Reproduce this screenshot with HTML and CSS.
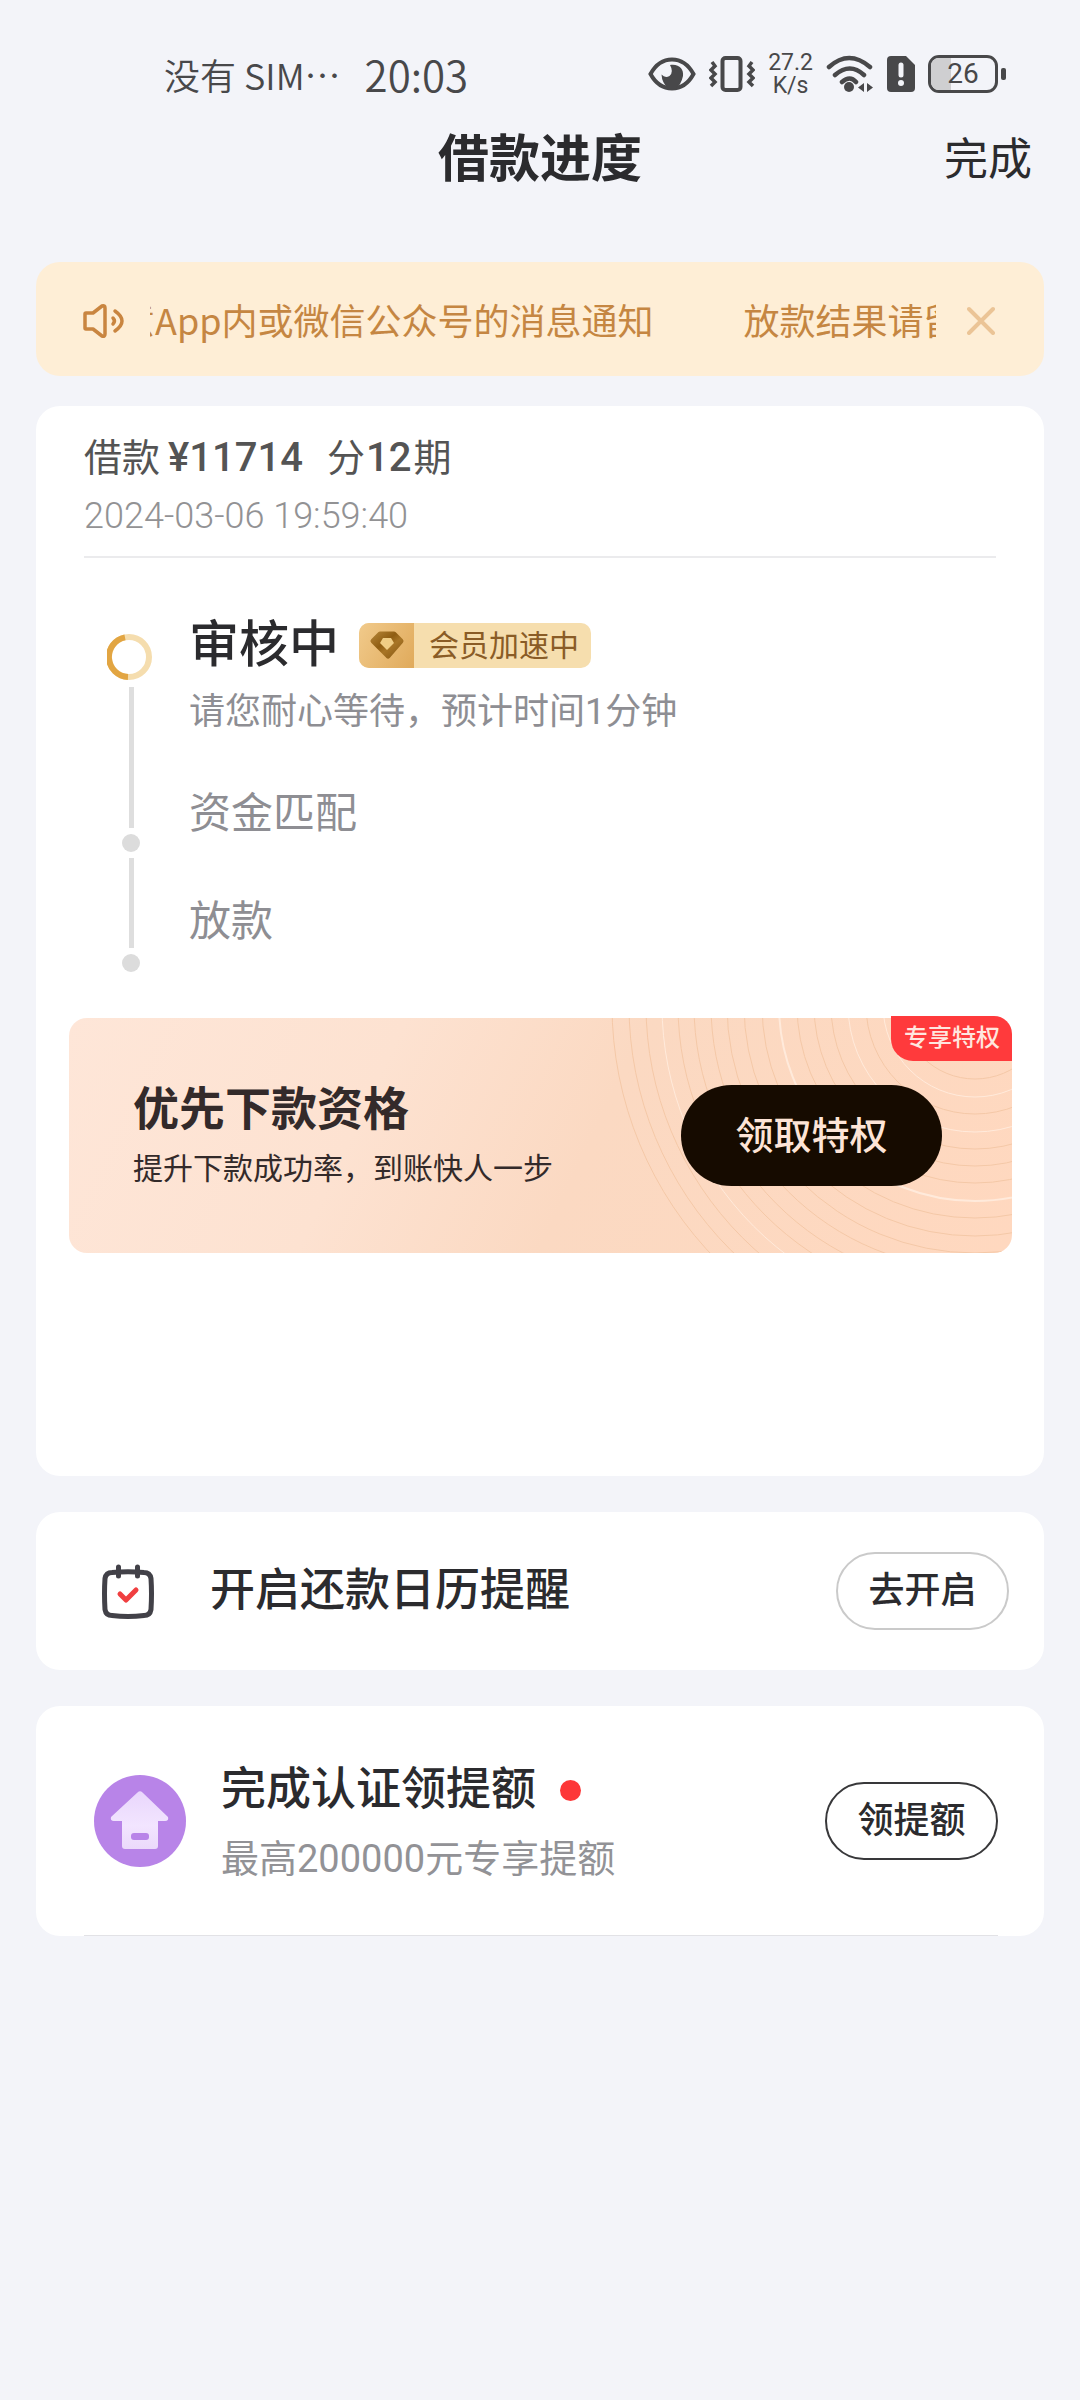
FILE: index.html
```html
<!DOCTYPE html>
<html lang="zh-CN">
<head>
<meta charset="utf-8">
<meta name="viewport" content="width=device-width">
<title>借款进度</title>
<link rel="stylesheet" href="styles.css">
</head>
<body>
<div class="status">
  <span class="carrier">没有 SIM…</span>
  <span class="clock">20:03</span>
  <div class="indicators">
    <svg width="48" height="34" viewBox="0 0 48 34"><path d="M2.500 17C8 7 15.500 2.500 24 2.500S40 7 45.500 17C40 27 32.500 31.500 24 31.500S8 27 2.500 17Z" fill="none" stroke="#48484a" stroke-width="4"/><path d="M22 8C31 6.500 36 12 35 19Q33 28 28 31H20Q14 26 13.500 17.500 17 21.500 21.500 19 26 15 22 8Z" fill="#48484a"/></svg>
    <svg width="46" height="36" viewBox="0 0 46 36" fill="none" stroke="#48484a" stroke-width="4"><rect x="13.500" y="2" width="18" height="32" rx="3"/><path d="M3 6l3 4-4 4 4 4-4 4 4 4-4 4M43 6l-3 4 4 4-4 4 4 4-4 4 4 4" stroke-width="3.500"/></svg>
    <span class="speed"><span>27.2</span><span>K/s</span></span>
    <svg width="48" height="38" viewBox="0 0 48 38" fill="none" stroke="#48484a" stroke-width="4.500" stroke-linecap="round"><path d="M3 12q20-18 41 0M9 20q15-13 29 0M16 27q8-7 14 0"/><circle cx="23" cy="32" r="5" fill="#48484a" stroke="none"/><path d="M38 28v9l-6-4.500ZM41 28v9l6-4.500Z" fill="#48484a" stroke="none"/></svg>
    <svg width="28" height="36" viewBox="0 0 28 36"><path d="M4 0h15l9 9v23q0 4-4 4H4q-4 0-4-4V4q0-4 4-4Z" fill="#48484a"/><path d="M14 9v10" stroke="#f3f4f9" stroke-width="5" stroke-linecap="round"/><circle cx="14" cy="27" r="3" fill="#f3f4f9"/></svg>
    <span class="battery"><span class="cell"><span class="charge"></span><span class="level">26</span></span><span class="nub"></span></span>
  </div>
</div>

<header class="header">
  <h1 class="page-title">借款进度</h1>
  <button class="done" type="button">完成</button>
</header>

<main class="main">
  <section class="notice">
    <svg class="speaker" width="44" height="40" viewBox="0 0 44 40" fill="none" stroke="#c98540" stroke-width="3.500" stroke-linecap="round" stroke-linejoin="round"><path d="M4 14h7l9-7q3-1 3 2v26q0 3-3 2l-9-7H4q-1 0-1-1V15q0-1 1-1Z"/><path d="M31 19q3 3 0 6M33 12q14 10 0 20"/></svg>
    <div class="ticker">
      <div class="ticker-track">
        <span>放款结果请留意App内或微信公众号的消息通知</span>
        <span>放款结果请留意App内或微信公众号的消息通知</span>
      </div>
    </div>
    <button class="close" type="button" aria-label="关闭"><svg width="28" height="32" viewBox="0 0 28 32"><path d="M2 6l24 24M26 6L2 30" stroke="#ebc496" stroke-width="4" stroke-linecap="round"/></svg></button>
  </section>

  <section class="card loan">
    <div class="loan-head">
      <p class="loan-title"><span>借款</span><b class="amount">¥11714</b><span>分</span><b class="terms">12</b><span>期</span></p>
      <p class="loan-time">2024-03-06 19:59:40</p>
    </div>
    <div class="timeline">
      <div class="rail" aria-hidden="true">
        <svg width="48" height="48" viewBox="0 0 48 48" fill="none" stroke-width="6"><circle cx="22" cy="24" r="20" stroke="#f5ddae"/><path d="M18 4.400A20 20 0 0 0 21 44" stroke="#e2a542"/></svg>
        <span class="line line-long"></span>
        <span class="dot"></span>
        <span class="line"></span>
        <span class="dot"></span>
      </div>
      <ol class="steps">
        <li>
          <div class="step-now">
            <h2 class="step-title">审核中</h2>
            <span class="vip"><span class="vip-icon"><svg width="36" height="30" viewBox="0 0 36 30"><defs><linearGradient id="gem" x1="0" y1="0" x2="1" y2="1"><stop offset="0" stop-color="#b07f32"/><stop offset=".4" stop-color="#8f5d12"/><stop offset=".6" stop-color="#a87526"/><stop offset="1" stop-color="#8a5a14"/></linearGradient></defs><path d="M11 4h14l7 7-13 15L4 11Z" fill="url(#gem)" stroke="url(#gem)" stroke-width="5" stroke-linejoin="round"/><path d="M14 8h8l3 5-7 7-7-7Z" fill="#f0cd85"/></svg></span><span class="vip-text">会员加速中</span></span>
          </div>
          <p class="step-note">请您耐心等待，预计时间1分钟</p>
        </li>
        <li class="step-next">资金匹配</li>
        <li class="step-next">放款</li>
      </ol>
    </div>
    <div class="banner">
      <svg class="ripples" width="420" height="235" viewBox="0 0 420 235" fill="none" stroke="#f4c8a7" stroke-width="1">
        <circle cx="383" cy="-13" r="74"/><circle cx="383" cy="-13" r="92" stroke="#ffeadb"/><circle cx="383" cy="-13" r="109"/><circle cx="383" cy="-13" r="127" stroke="#ffeadb"/><circle cx="383" cy="-13" r="144"/><circle cx="383" cy="-13" r="161"/><circle cx="383" cy="-13" r="178"/><circle cx="383" cy="-13" r="196" stroke="#ffeadb" stroke-width="2"/><circle cx="383" cy="-13" r="213"/><circle cx="383" cy="-13" r="231"/><circle cx="383" cy="-13" r="248"/><circle cx="383" cy="-13" r="264"/><circle cx="383" cy="-13" r="281"/><circle cx="383" cy="-13" r="297"/><circle cx="383" cy="-13" r="313" stroke="#ffeadb"/><circle cx="383" cy="-13" r="329"/><circle cx="383" cy="-13" r="346"/><circle cx="383" cy="-13" r="363"/>
      </svg>
      <div class="banner-text">
        <h2 class="banner-title">优先下款资格</h2>
        <p class="banner-note">提升下款成功率，到账快人一步</p>
      </div>
      <button class="claim" type="button">领取特权</button>
      <span class="tag">专享特权</span>
    </div>
  </section>

  <section class="card remind">
    <svg width="52" height="56" viewBox="0 0 52 56" fill="none" stroke="#424148" stroke-width="5" stroke-linecap="round" stroke-linejoin="round"><path d="M10 9.500q16-1.500 32 0 6 0 7 6 1 15 0 31-1 6-7 6-16 2-32 0-6 0-7-6-1-16 0-31 1-6 7-6Z"/><path d="M16.500 4v9M35.500 4v9"/><path d="M18 31l6 6 10-10" stroke="#f03f40"/></svg>
    <h2 class="row-title">开启还款日历提醒</h2>
    <button class="pill" type="button">去开启</button>
  </section>

  <section class="card raise">
    <svg width="92" height="92" viewBox="0 0 92 92"><defs><linearGradient id="house" x1="0" y1="0" x2="0" y2="1"><stop offset="0" stop-color="#e9d6fc"/><stop offset=".6" stop-color="#f2e5ff"/><stop offset="1" stop-color="#ebd9fb"/></linearGradient></defs><circle cx="46" cy="46" r="46" fill="#b884e8"/><path d="M43.500 17.500q2.500-2.500 5 0L74 42q1 4-3 4h-7v25q0 3-3 3H31q-3 0-3-3V46h-8q-4 0-3-4Z" fill="url(#house)"/><rect x="37" y="58" width="18" height="7" rx="3" fill="#b884e8"/></svg>
    <div class="raise-text">
      <h2 class="row-title">完成认证领提额<span class="unread"></span></h2>
      <p class="raise-note">最高200000元专享提额</p>
    </div>
    <button class="pill pill-dark" type="button">领提额</button>
  </section>
</main>
</body>
</html>
```

FILE: styles.css
```css
* {
  box-sizing: border-box;
}

body,
h1,
h2,
p,
ol {
  margin: 0;
  padding: 0;
}

body {
  background: #f3f4f9;
  color: #2b2b2e;
  font-family: Roboto, "Noto Sans CJK SC", sans-serif;
}

ol {
  list-style: none;
}

button {
  margin: 0;
  padding: 0;
  border: 0;
  background: none;
  color: inherit;
  font: inherit;
}

svg {
  display: block;
  flex: none;
}

/* Status bar */
.status {
  display: flex;
  align-items: center;
  padding: 48px 74px 0 164px;
  height: 100px;
  color: #48484a;
}

.carrier {
  font: 36px/52px "Noto Sans CJK SC", sans-serif;
  font-weight: 350;
}

.clock {
  margin-left: 24px;
  font: 42px/52px "Noto Sans CJK SC", sans-serif;
  font-weight: 350;
}

.indicators {
  display: flex;
  align-items: center;
  gap: 13px;
  margin-left: auto;
}

.speed {
  display: flex;
  flex-direction: column;
  align-items: center;
  font-size: 23px;
  line-height: 23px;
}

.battery {
  display: flex;
  align-items: center;
  gap: 3px;
}

.cell {
  display: flex;
  position: relative;
  align-items: center;
  justify-content: center;
  width: 70px;
  height: 38px;
  border: 3px solid #48484a;
  border-radius: 11px;
}

.charge {
  position: absolute;
  inset: 0 auto 0 0;
  width: 20px;
  border-radius: 8px 0 0 8px;
  background: #cfcfd1;
}

.level {
  position: relative;
  font-size: 28px;
  line-height: 32px;
}

.nub {
  width: 5px;
  height: 12px;
  border-radius: 2px;
  background: #48484a;
}

/* Title bar */
.header {
  display: grid;
  grid-template-columns: 1fr auto 1fr;
  align-items: center;
  height: 120px;
  padding: 0 48px;
}

.page-title {
  grid-column: 2;
  font-size: 51px;
  font-weight: 700;
  line-height: 72px;
}

.done {
  justify-self: end;
  font-size: 44px;
  line-height: 60px;
}

.main {
  padding: 42px 36px 0;
}

/* Scrolling notice */
.notice {
  display: flex;
  align-items: center;
  height: 114px;
  padding: 0 49px 0 46px;
  border-radius: 24px;
  background: #feeed6;
  color: #c58642;
  font-family: "Noto Sans CJK SC", sans-serif;
}

.ticker {
  flex: 1;
  margin: 0 31px 0 24px;
  overflow: hidden;
  font-size: 36px;
  line-height: 48px;
  white-space: nowrap;
}

.ticker-track {
  display: flex;
  gap: 90px;
  margin-left: -247px;
}

/* Cards */
.card {
  margin-top: 36px;
  border-radius: 24px;
  background: #fff;
}

.loan {
  margin-top: 30px;
  padding: 28px 0 223px;
}

.loan-head {
  margin: 0 48px;
  padding-bottom: 16px;
  border-bottom: 2px solid #ebebed;
}

.loan-title {
  display: flex;
  align-items: baseline;
  color: #545454;
  font-size: 38px;
  line-height: 48px;
}

.amount,
.terms {
  font-size: 40px;
  font-weight: 500;
}

.amount {
  margin: 0 24px 0 8px;
}

.terms {
  margin: 0 2px 0 1px;
}

.loan-time {
  margin-top: 10px;
  color: #929294;
  font-size: 36px;
  font-weight: 350;
  line-height: 48px;
}

/* Progress */
.timeline {
  display: flex;
  gap: 34px;
  margin: 56px 48px 0 71px;
}

.rail {
  display: flex;
  flex-direction: column;
  align-items: center;
  gap: 6px;
  padding-top: 19px;
}

.line {
  width: 5px;
  height: 90px;
  background: #dedede;
}

.line-long {
  height: 141px;
}

.dot {
  width: 18px;
  height: 18px;
  border-radius: 50%;
  background: #dcdcdc;
}

.steps {
  display: flex;
  flex-direction: column;
  gap: 48px;
  padding-top: 1px;
  color: #8e8e93;
}

.step-now {
  display: flex;
  align-items: center;
  gap: 20px;
}

.step-title {
  color: #2b2b2e;
  font-size: 50px;
  font-weight: 500;
  line-height: 60px;
}

.vip {
  display: flex;
  height: 45px;
  border-radius: 10px;
  overflow: hidden;
  background: #f6deae;
}

.vip-icon {
  display: flex;
  align-items: center;
  justify-content: center;
  width: 55px;
  background: linear-gradient(120deg, #f1ca8b, #e0aa5b);
}

.vip-text {
  padding: 0 12px 0 15px;
  color: #8a5c26;
  font-size: 30px;
  line-height: 45px;
}

.step-note {
  margin-top: 13px;
  font-size: 36px;
  line-height: 48px;
}

.step-next {
  font-size: 42px;
  line-height: 60px;
}

/* Privilege banner */
.banner {
  display: flex;
  position: relative;
  align-items: center;
  justify-content: space-between;
  height: 235px;
  margin: 46px 32px 0 33px;
  padding: 0 70px 0 64px;
  border-radius: 18px;
  background: linear-gradient(115deg, #fee6d8 0%, #fde2d1 32%, #fbd9c2 55%, #ffd8bf 100%);
}

.ripples {
  position: absolute;
  top: 0;
  right: 0;
  border-radius: 0 18px 18px 0;
}

.banner-text {
  color: #332a2a;
}

.banner-title {
  font-size: 46px;
  font-weight: 600;
  line-height: 60px;
}

.banner-note {
  margin-top: 6px;
  font-size: 30px;
  line-height: 48px;
}

.claim {
  position: relative;
  width: 261px;
  height: 101px;
  border-radius: 51px;
  background: #160b00;
  color: #fde4d6;
  font-size: 38px;
  font-weight: 500;
  line-height: 60px;
}

.tag {
  position: absolute;
  top: -2px;
  right: 0;
  padding: 0 12px 0 13px;
  border-radius: 0 18px 0 22px;
  background: #ff3a3c;
  color: #ffe6df;
  font-size: 24px;
  font-weight: 500;
  line-height: 45px;
}

/* Action rows */
.remind,
.raise {
  display: flex;
  align-items: center;
}

.remind {
  height: 158px;
  gap: 56px;
  padding: 0 35px 0 66px;
}

.row-title {
  display: flex;
  align-items: center;
  font-size: 45px;
  font-weight: 500;
  line-height: 60px;
}

.pill {
  width: 173px;
  height: 78px;
  margin-left: auto;
  border: 2px solid #cacaca;
  border-radius: 39px;
  font-size: 36px;
  font-weight: 500;
  line-height: 48px;
}

.pill-dark {
  border-color: #38383a;
}

.raise {
  position: relative;
  height: 230px;
  gap: 35px;
  padding: 0 46px 0 58px;
}

.raise::after {
  content: "";
  position: absolute;
  right: 46px;
  bottom: 0;
  left: 48px;
  height: 1px;
  background: #e2e2e6;
}

.unread {
  width: 21px;
  height: 21px;
  margin-left: 24px;
  border-radius: 50%;
  background: #fd3738;
}

.raise-text {
  padding-top: 7px;
}

.raise-note {
  margin-top: 9px;
  color: #929296;
  font-size: 38px;
  line-height: 60px;
}
```
